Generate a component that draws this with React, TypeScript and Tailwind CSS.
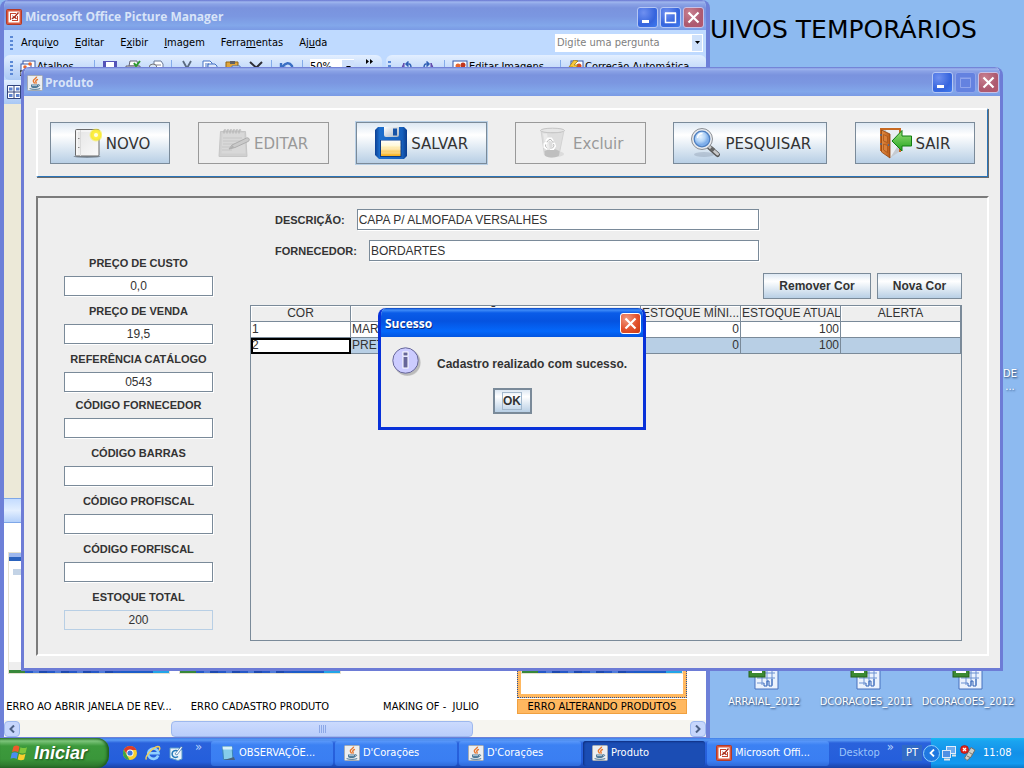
import React from "react";

const TAHOMA = "font-['DejaVu_Sans_Condensed','DejaVu_Sans',sans-serif]";
const VERDANA = "font-['DejaVu_Sans',sans-serif]";
const ARIAL = "font-['Liberation_Sans',sans-serif]";

/* ---------- icons ---------- */

function JavaIcon({ className = "size-4" }: { className?: string }) {
  return (
    <svg viewBox="0 0 16 16" className={className} aria-hidden="true">
      <rect x=".5" y=".5" width="15" height="15" rx="1" fill="#eceef0" stroke="#a5abb4" />
      <path d="M9.6 1.6C10 3.2 6 4.2 6.3 6c.1 1 1 1.6 1.4 2.6M11 4.4C9 5 8.2 6 9 7.2c.3.5.2.9-.1 1.4" fill="none" stroke="#e8762c" strokeWidth="1.4" />
      <path d="M4 9.5h7.2v1.6c0 1.2-1 2-2 2H6c-1.200 0-2-.8-2-2z" fill="#4c7896" />
      <path d="M11 9.800c2-.6 2.500 1.200-.3 2M2.600 13.600c2.500 1 8.200 1 10.600 0" fill="none" stroke="#4c7896" />
      <path d="M5 10.600h5" stroke="#d7e4ee" strokeWidth=".7" />
    </svg>
  );
}

function PictureManagerIcon() {
  return (
    <svg viewBox="0 0 16 16" className="size-4 shrink-0" aria-hidden="true">
      <rect x=".5" y=".5" width="15" height="15" rx="1" fill="#d9583f" stroke="#b23a28" />
      <rect x="2.500" y="2.500" width="11" height="11" fill="#fff" />
      <path d="M4 4h6v1H5v6H4zM12 7v5H6v-1h5V7z" fill="#c4452f" />
      <path d="m6 6 2 1.500L12 3l1 1-3.500 4L11 9.500l-1 .8L8.500 9 6 10.500 5.500 9.500 7 8z" fill="#a92c1a" />
    </svg>
  );
}

function NovoIcon() {
  return (
    <svg viewBox="0 0 32 32" className="size-8" aria-hidden="true">
      <defs>
        <linearGradient id="novoPage" x1="0" y1="0" x2="1" y2="1">
          <stop offset="0" stopColor="#e4e4e4" />
          <stop offset="1" stopColor="#fafafa" />
        </linearGradient>
        <radialGradient id="novoSun">
          <stop offset="0" stopColor="#fffef0" />
          <stop offset=".3" stopColor="#fff04a" />
          <stop offset=".7" stopColor="#f7ea3a" />
          <stop offset="1" stopColor="#f7ea3a" stopOpacity="0" />
        </radialGradient>
      </defs>
      <ellipse cx="17" cy="29.500" rx="13.500" ry="1.500" fill="#55606c" opacity=".6" />
      <rect x="5.500" y="2.500" width="23.500" height="26.500" rx="1" fill="url(#novoPage)" stroke="#6b6b6b" />
      <path d="M7 4v24M6.500 4H28" stroke="#fff" />
      <path d="M10.500 3v26" stroke="#dadada" />
      <path d="M8 11.500h1.500M8 20.500h1.500" stroke="#8a8a8a" strokeWidth="1.200" />
      <circle cx="26" cy="8" r="7" fill="url(#novoSun)" />
      <circle cx="26" cy="8" r="2" fill="#fffde0" />
    </svg>
  );
}

function EditarIcon() {
  return (
    <svg viewBox="0 0 32 32" className="size-8" aria-hidden="true">
      <path d="M2.500 4.500h25l1.500 25H1z" fill="#d0d0d0" stroke="#c6c6c6" />
      <path d="M3.500 26.500 4.500 6h21.500l1.500 20.500z" fill="#d8d8d8" />
      <path d="M5 11h19M5 14h18M5 17h15M4 20h11M4 23h10" stroke="#c6c6c6" />
      {[6, 9, 12, 15, 18, 21].map((x) => (
        <path key={x} d={`M${x} 6.500V3.500a1.200 1.500 0 0 1 2 0`} fill="none" stroke="#b4b4b4" strokeWidth="1.100" />
      ))}
      <path d="m11 22 3-4L28.500 11c2.500-.8 3.800 2 1.800 3.400L17 20.500z" fill="#cacaca" stroke="#adadad" />
      <path d="m11 22 3.500-3.500 2 2z" fill="#b0b0b0" />
    </svg>
  );
}

function SalvarIcon() {
  return (
    <svg viewBox="0 0 32 32" className="size-8" aria-hidden="true">
      <defs>
        <linearGradient id="diskBody" x1="0" y1="0" x2="1" y2="0">
          <stop offset="0" stopColor="#0c3f93" />
          <stop offset=".15" stopColor="#1d6fce" />
          <stop offset=".85" stopColor="#1660bd" />
          <stop offset="1" stopColor="#0b3c8c" />
        </linearGradient>
        <linearGradient id="diskLabel" x1="0" y1="0" x2="0" y2="1">
          <stop offset="0" stopColor="#fff" />
          <stop offset=".35" stopColor="#fff6cf" />
          <stop offset="1" stopColor="#f9b21d" />
        </linearGradient>
        <linearGradient id="diskShutter" x1="0" y1="0" x2="1" y2="1">
          <stop offset="0" stopColor="#fff" />
          <stop offset="1" stopColor="#a9b5c2" />
        </linearGradient>
      </defs>
      <path d="M3 0h26l3 3v26l-3 3H4l-4-4V3z" fill="url(#diskBody)" />
      <path d="M9 0h15v8q0 2-2 2H11q-2 0-2-2z" fill="url(#diskShutter)" />
      <rect x="18" y="1.500" width="4" height="7" fill="#1753a6" />
      <rect x="5" y="13" width="21.500" height="17" fill="#0a3b87" />
      <rect x="6" y="13.500" width="19.500" height="15.500" fill="url(#diskLabel)" />
      <path d="M6 18h19.500M6 22h19.500M6 26h19.500" stroke="#fff" opacity=".35" />
    </svg>
  );
}

function ExcluirIcon() {
  return (
    <svg viewBox="0 0 32 32" className="size-8" aria-hidden="true">
      <ellipse cx="19" cy="27" rx="8" ry="3" fill="#dcdcdc" />
      <path d="M4 3.500 7.500 28q6.500 4 14.500 0L27 3.500z" fill="#dedede" stroke="#d2d2d2" />
      <path d="M7.500 24q8-4 15 0l-.8 5q-7 3-13.500 0z" fill="#bfbfbf" />
      <path d="M6 6.500 9 23h4L10 6.500z" fill="#eee" opacity=".8" />
      <ellipse cx="15.500" cy="3.500" rx="12" ry="2.300" fill="#e6e6e6" stroke="#c4c4c4" />
      <path d="M14 5.500h10" stroke="#c8c8c8" />
      <path d="m9.500 14.500 2-2.500h2.500l1.500 2.500M16.500 16l1 3-1.500 2.500H13M10.500 21.500 8 20v-3l1.500-1.500" fill="none" stroke="#fff" strokeWidth="3" />
      <path d="m10 15 2-2.500h2l1.500 2.500M16.500 17l.5 2-1.500 2H13M10.500 21 8.500 19.500v-2" fill="none" stroke="#bcbcbc" strokeWidth="1" />
    </svg>
  );
}

function PesquisarIcon() {
  return (
    <svg viewBox="0 0 32 32" className="size-8" aria-hidden="true">
      <defs>
        <radialGradient id="lens" cx=".4" cy=".35">
          <stop offset="0" stopColor="#e8f4ff" />
          <stop offset=".6" stopColor="#b6d6f8" />
          <stop offset="1" stopColor="#7eaeea" />
        </radialGradient>
      </defs>
      <ellipse cx="14" cy="27.500" rx="10" ry="2.500" fill="#8c9cae" opacity=".4" />
      <path d="m19 20 8.500 7.500" stroke="#555" strokeWidth="5" strokeLinecap="round" />
      <path d="m19 19.500 8.500 7.500" stroke="#c9c9c9" strokeWidth="3" strokeLinecap="round" />
      <path d="m21 21 3 2.500" stroke="#666" strokeWidth="4" />
      <circle cx="12" cy="12" r="10.500" fill="#e9ebee" stroke="#8c9096" strokeWidth="1" />
      <circle cx="12" cy="12" r="7.800" fill="url(#lens)" stroke="#4e7fc0" strokeWidth="1.300" />
      <path d="M7.500 11q.5-4.500 5-4.500" fill="none" stroke="#fff" strokeWidth="1.300" />
    </svg>
  );
}

function SairIcon() {
  return (
    <svg viewBox="0 0 32 32" className="size-8" aria-hidden="true">
      <defs>
        <linearGradient id="door" x1="0" y1="0" x2="1" y2="0">
          <stop offset="0" stopColor="#e28c45" />
          <stop offset="1" stopColor="#b95b17" />
        </linearGradient>
        <linearGradient id="arrowGreen" x1="0" y1="0" x2="0" y2="1">
          <stop offset="0" stopColor="#9be07a" />
          <stop offset="1" stopColor="#1fa21b" />
        </linearGradient>
      </defs>
      <path d="M0 1h21v24h-2V3H2v21H0z" fill="#c76a23" />
      <path d="M2 3h17v22l-9 6z" fill="#c5cad0" />
      <path d="M6 3h13v14L10 31z" fill="#e9edf1" />
      <path d="m1.500 3 8.500 4v24l-8.500-6z" fill="url(#door)" stroke="#8e430e" strokeWidth=".8" />
      <path d="m3.500 7.500 4 2v6l-4-1.500zM3.500 17l4 1.500v7l-4-2.500z" fill="#d9803a" stroke="#a45215" strokeWidth=".7" />
      <path d="M1 7v2M1 16v2M8.500 17v2" stroke="#4b6c9a" strokeWidth="1.400" />
      <path d="M12 14 22 3.500V9h9.500v10H22v5z" fill="url(#arrowGreen)" stroke="#107c10" />
    </svg>
  );
}

function InfoIcon() {
  return (
    <svg viewBox="0 0 32 32" className="size-8" aria-hidden="true">
      <circle cx="15.500" cy="16" r="13" fill="#777" opacity=".25" />
      <circle cx="15" cy="15" r="13.500" fill="#777" opacity=".25" />
      <circle cx="13.500" cy="13.500" r="12.700" fill="#ccccff" stroke="#666699" />
      <path d="M13.500 4.500v5M13.500 10v11.500" stroke="#fff" strokeWidth="6" />
      <path d="M13.500 5.500v3M13.500 10v10.500" stroke="#666699" strokeWidth="4" />
    </svg>
  );
}

function SheetIcon() {
  return (
    <svg viewBox="0 0 32 32" className="size-8" aria-hidden="true">
      <path d="M7 2h23v28H7z" fill="#eaf2fd" stroke="#4770bd" />
      <path d="M9 14h18M9 19h18M9 24h7M14 12v14M19 12v14M24 12v14" stroke="#6a91d2" />
      <path d="M16 24v3h3v-5h2v5h3v-7" fill="none" stroke="#2e61b5" />
      <rect x="1" y="4" width="16" height="14" fill="#3c8a32" stroke="#24601d" />
      <path d="M4 13h10M9 8h5" stroke="#fff" strokeWidth="2" />
    </svg>
  );
}

function WindowsFlag() {
  return (
    <svg viewBox="0 0 20 18" className="h-[18px] w-5" aria-hidden="true">
      <path d="M3.500 2.500q3-2 6 .2l-1.300 5.600q-3-2-6.200-.3z" fill="#ee5a2b" />
      <path d="M10.500 3.200q3 1.800 6.500 0l-1.300 5.600q-3.200 1.600-6.500 0z" fill="#7fc73c" />
      <path d="M1.800 9q3-1.600 6.200.3L6.700 15q-3-2-6.200-.3z" fill="#4a8df0" />
      <path d="M9 9.800q3.200 1.700 6.500 0l-1.400 5.600q-3 1.600-6.400 0z" fill="#f9cf2e" />
    </svg>
  );
}

function ChromeIcon() {
  return (
    <svg viewBox="0 0 16 16" className="size-4" aria-hidden="true">
      <circle cx="8" cy="8" r="7" fill="#f7cf2f" />
      <path d="M1.800 4.800A7 7 0 0 1 14.400 5H8L4.800 9z" fill="#dc3b2a" />
      <path d="M1.800 4.800 5 10.500l2.500 4.500A7 7 0 0 1 1.800 4.800z" fill="#39a34a" />
      <circle cx="8" cy="8" r="3.500" fill="#fff" />
      <circle cx="8" cy="8" r="2.600" fill="#3b78dc" />
    </svg>
  );
}

function ExplorerIcon() {
  return (
    <svg viewBox="0 0 16 16" className="size-4" aria-hidden="true">
      <path d="M13.200 10.500A5.200 5.200 0 1 1 13.500 8.200H4" fill="none" stroke="#8fd0ff" strokeWidth="2.600" />
      <path d="M1.500 14.500C-1 12 8 2 13 1.500c2.500 0 2 2.500 1 4" fill="none" stroke="#f5cf55" strokeWidth="1.400" />
    </svg>
  );
}

function DesktopIcon() {
  return (
    <svg viewBox="0 0 16 16" className="size-4" aria-hidden="true">
      <path d="M2 3h9l3 2v9l-4 1.500L2 13z" fill="#e8f3fb" stroke="#5a9ac8" />
      <path d="M10.500 7A3.500 3.500 0 1 0 10 11.500" fill="none" stroke="#2479b8" strokeWidth="1.500" />
      <path d="m7 9 6-7.500 1.500 1L9 10z" fill="#fff" stroke="#3973a8" strokeWidth=".7" />
    </svg>
  );
}

function NotepadIcon() {
  return (
    <svg viewBox="0 0 16 16" className="size-4" aria-hidden="true">
      <path d="M2.500 1.500h9.500l1 13H3.500z" fill="#86cdea" stroke="#3e86b4" />
      <path d="M2.500 1.500H12l.3 3H2.800z" fill="#d6f0fa" />
      <path d="M4 15h11l-1-3z" fill="#4a6480" />
    </svg>
  );
}

function TrayNetIcon() {
  return (
    <svg viewBox="0 0 16 16" className="size-4" aria-hidden="true">
      <rect x="5.500" y="1.500" width="9" height="7" fill="#6facef" stroke="#e2eefc" />
      <rect x="1.500" y="5.500" width="8" height="7" fill="#4f90e4" stroke="#dbe8f8" />
      <path d="M3 14.500h6M11 10.500h4" stroke="#e2e6ea" strokeWidth="2" />
    </svg>
  );
}

function TrayUsbIcon() {
  return (
    <svg viewBox="0 0 16 16" className="size-4" aria-hidden="true">
      <path d="m7 9 4-6.500L15 5l-4 7-4 3.500L4.500 13z" fill="#cfcfc9" stroke="#6e6e6a" />
      <path d="m7 11 3 1.500M9.500 7.500l3 2" stroke="#76766f" />
      <circle cx="4.500" cy="4.500" r="4" fill="#e5231b" stroke="#a30d08" strokeWidth=".6" />
      <path d="m3 3 3 3m0-3L3 6" stroke="#fff" strokeWidth="1.300" />
    </svg>
  );
}

const toolbarGlyphs: Record<string, React.ReactNode> = {
  atalhos: (
    <>
      <rect x="3" y="1" width="12" height="9" fill="#fff" stroke="#3558a8" />
      <rect x="1" y="4" width="10" height="8" fill="#fff" stroke="#3558a8" />
      <circle cx="5" cy="7" r="1.800" fill="#e8662d" />
      <circle cx="10" cy="4" r="1.800" fill="#e8662d" />
      <path d="M0 11h6v5H0z" fill="#fff" stroke="#000" />
    </>
  ),
  salvar: (
    <>
      <rect x="1" y="1" width="14" height="14" fill="#5453b8" />
      <rect x="4" y="2" width="8" height="7" fill="#fff" />
      <rect x="4" y="10" width="8" height="5" fill="#c8cbe8" />
    </>
  ),
  imprimir: (
    <>
      <path d="M5 1h7l1 5H4z" fill="#fff" stroke="#667" />
      <path d="M1 6h14v6H1z" fill="#cfd2d6" stroke="#667" />
      <path d="m9 3 2 3 4-5" fill="none" stroke="#2f9a2f" strokeWidth="2" />
    </>
  ),
  pesquisar: (
    <>
      <path d="M6 1h7l2 3v8H6z" fill="#fff" stroke="#6b7a99" />
      <circle cx="5" cy="8" r="4" fill="#d8e5f5" stroke="#777" />
      <path d="M8 5h5M8 8h5" stroke="#889" />
    </>
  ),
  recortar: <path d="m4 1 5 9M12 1 7 10" stroke="#5b6b80" strokeWidth="1.800" />,
  copiar: (
    <>
      <path d="M1 1h7l2 2v8H1z" fill="#fff" stroke="#4472c4" />
      <path d="M6 4h7l2 2v8H6z" fill="#dbe7fa" stroke="#4472c4" />
      <path d="M3 4h4M3 6h3M8 8h5" stroke="#4472c4" />
    </>
  ),
  colar: (
    <>
      <path d="M1 2h12v12H1z" fill="#e0a63c" stroke="#8f6415" />
      <path d="M5 1h5v3H5z" fill="#5f6064" />
      <path d="M7 6h8v9H7z" fill="#fff" stroke="#4472c4" />
    </>
  ),
  excluir: <path d="m2 2 12 11M14 2 3 13" stroke="#2e2e36" strokeWidth="2" />,
  desfazer: <path d="M3 7q6-7 10-1 1 4-2 8M2 3v5h5" fill="none" stroke="#3a6fc4" strokeWidth="2.400" />,
  girarEsq: (
    <>
      <path d="m1 14 5-11v11z" fill="#8763c4" stroke="#5b46a8" />
      <path d="M8 4h3q2 0 2 4M10.500 1.500 8 4l2.500 2.500" fill="none" stroke="#2f5fb4" strokeWidth="1.500" />
    </>
  ),
  girarDir: (
    <>
      <path d="M10 3v11h5z" fill="#8763c4" stroke="#5b46a8" />
      <path d="M8 4H5Q3 4 3 8M5.500 1.500 8 4 5.500 6.500" fill="none" stroke="#2f5fb4" strokeWidth="1.500" />
    </>
  ),
  editar: (
    <>
      <rect x="1" y="1" width="14" height="12" fill="#fff" stroke="#3558a8" />
      <circle cx="6" cy="6" r="2.500" fill="#e8662d" />
      <circle cx="11" cy="5" r="2.500" fill="#c1351c" />
    </>
  ),
  correcao: (
    <>
      <rect x="3" y="1" width="12" height="12" fill="#fff" stroke="#3558a8" />
      <circle cx="11" cy="6" r="2.500" fill="#d84c22" />
      <path d="M6 0 1 7h4l-3 7 8-9H6l4-4z" fill="#f8c83a" stroke="#9a7415" strokeWidth=".7" />
    </>
  ),
};

function Glyph({ name }: { name: string }) {
  return (
    <svg viewBox="0 0 16 16" className="size-4 shrink-0" aria-hidden="true">
      {toolbarGlyphs[name]}
    </svg>
  );
}

/* ---------- window chrome ---------- */

const captionLook = {
  blue: "bg-[radial-gradient(circle_at_30%_25%,#6f90f0,#3564dd_60%,#3f7cf0)] border-[#b4c6f4]",
  dim: "bg-[#6482e0] border-[#8ea5ea]",
  rose: "bg-[radial-gradient(circle_at_30%_25%,#c98090,#ad5a70_60%,#b4566c)] border-[#c9c0e4]",
  red: "bg-[radial-gradient(circle_at_30%_25%,#f09a80,#e2512c_55%,#c93a12)] border-[#fff]",
};

function CaptionButton({ kind, look, label }: { kind: "min" | "max" | "close"; look: keyof typeof captionLook; label: string }) {
  return (
    <button
      type="button"
      aria-label={label}
      disabled={look === "dim"}
      className={`flex size-[21px] items-center justify-center rounded-[3px] border ${captionLook[look]}`}
    >
      <svg viewBox="0 0 19 19" className="size-[19px]" aria-hidden="true">
        {kind === "min" && <path d="M4 13.500h7" stroke="#fff" strokeWidth="3" />}
        {kind === "max" && (
          <path d="M4.500 5.500h10v9h-10zM4 5h11" fill="none" stroke={look === "dim" ? "#90a5ec" : "#fff"} strokeWidth={look === "dim" ? 1 : 1.500} />
        )}
        {kind === "close" && <path d="m4.500 4.500 10 10m0-10-10 10" stroke="#fff" strokeWidth="2.200" />}
      </svg>
    </button>
  );
}

const inactiveTitle =
  "bg-[linear-gradient(#6674d0_0,#9fb6ee_2px,#8ba3e6_4px,#7a93de_8px,#7b97e1_55%,#82a7ea_85%,#7a9ae4_100%)]";

/* ---------- picture manager ---------- */

function Grip() {
  return <span className="h-3.5 w-[3px] shrink-0 bg-[repeating-linear-gradient(#5a88d6_0_2px,transparent_2px_4px)]" />;
}

function Sep() {
  return <span className="h-4 w-px shrink-0 bg-[#84acea]" />;
}

const menus: [string, string, string][] = [
  ["Arqui", "v", "o"],
  ["", "E", "ditar"],
  ["E", "x", "ibir"],
  ["", "I", "magem"],
  ["Ferra", "m", "entas"],
  ["Aj", "u", "da"],
];

function MiniShot() {
  return (
    <div className="flex h-[122px] w-[162px] flex-col border border-[#e5e2d0] bg-white">
      <div className="h-1 bg-[#9db8ee]" />
      <div className="h-1 bg-[#2a62bd]" />
      <div className="mt-2 ml-1 h-1.5 w-10 bg-[#c3d3e6]" />
      <div className="grow" />
      <div className="h-2 bg-[#eee]" />
      <div className="flex h-[3px]">
        <span className="w-4 bg-[#38883a]" />
        <span className="w-24 bg-[repeating-linear-gradient(90deg,#2558c8_0_8px,#4f7cdc_8px_14px,#1c49b0_14px_22px)]" />
        <span className="grow bg-[#1c5cc8]" />
        <span className="w-4 bg-[#22a4e8]" />
      </div>
    </div>
  );
}

const shots = [
  { caption: "ERRO AO ABRIR JANELA DE REV...", preview: true, selected: false },
  { caption: "ERRO CADASTRO PRODUTO", preview: true, selected: false },
  { caption: "MAKING OF -  JULIO", preview: false, selected: false },
  { caption: "ERRO ALTERANDO PRODUTOS", preview: true, selected: true },
];

function PictureManager() {
  return (
    <section className={`absolute top-0 left-0 flex h-full w-[710px] flex-col overflow-hidden rounded-t-lg border-x-4 border-[#6d80d8] bg-[#bfdaff] text-[11px] ${TAHOMA}`}>
      <header className={`-mx-1 flex h-[30px] shrink-0 items-center gap-[3px] px-1.5 pt-1 ${inactiveTitle}`}>
        <PictureManagerIcon />
        <h2 className="grow font-['Open_Sans',sans-serif] text-[12px] leading-4 font-bold text-[#d8e4f8]">Microsoft Office Picture Manager</h2>
        <div className="flex gap-0.5">
          <CaptionButton kind="min" look="blue" label="Minimizar" />
          <CaptionButton kind="max" look="blue" label="Maximizar" />
          <CaptionButton kind="close" look="rose" label="Fechar" />
        </div>
      </header>
      <div className="flex h-[25px] shrink-0 items-center pr-[3px] pl-1.5">
        <Grip />
        <nav className="ml-2 flex grow gap-4">
          {menus.map(([a, u, b]) => (
            <button key={a + u + b} type="button" className="leading-4 text-black">
              {a}
              <u>{u}</u>
              {b}
            </button>
          ))}
        </nav>
        <input aria-label="Digite uma pergunta" placeholder="Digite uma pergunta" className="h-[18px] w-[136px] bg-white px-0.5 placeholder:text-[#808080]" />
        <button type="button" aria-label="Abrir lista" className="flex h-[18px] w-3 items-center justify-center border border-white bg-[#cfe1fb]">
          <svg viewBox="0 0 5 3" className="h-[3px] w-[5px]" aria-hidden="true"><path d="M0 0h5L2.500 3z" /></svg>
        </button>
      </div>
      <div className="flex h-[25px] shrink-0 gap-1">
        <div className="flex w-[378px] items-center gap-[7px] rounded-md bg-[linear-gradient(#e3efff,#a9c8f5)] pr-2 pl-1.5 whitespace-nowrap">
          <Grip />
          <Glyph name="atalhos" />
          <span className="-ml-1.5 w-[50px] shrink-0">Atalhos...</span>
          <Sep />
          <Glyph name="salvar" />
          <Glyph name="imprimir" />
          <Glyph name="pesquisar" />
          <Sep />
          <Glyph name="recortar" />
          <Glyph name="copiar" />
          <Glyph name="colar" />
          <Glyph name="excluir" />
          <Sep />
          <Glyph name="desfazer" />
          <Sep />
          <span className="flex w-11 shrink-0 items-center justify-between bg-white">
            50%
            <span className="flex h-4 w-3 items-center justify-center bg-[#cfe1fb]">
              <svg viewBox="0 0 5 3" className="h-[3px] w-[5px]" aria-hidden="true"><path d="M0 0h5L2.500 3z" /></svg>
            </span>
          </span>
          <svg viewBox="0 0 8 5" className="mb-3 ml-auto h-[5px] w-2" aria-hidden="true">
            <path d="M0 0v5l3-2.500zM4 0v5l3-2.500z" />
          </svg>
        </div>
        <div className="flex grow items-center gap-[7px] rounded-md bg-[linear-gradient(#e3efff,#a9c8f5)] pl-0.5 whitespace-nowrap">
          <Grip />
          <Glyph name="girarEsq" />
          <Glyph name="girarDir" />
          <Sep />
          <Glyph name="editar" />
          <span className="-ml-1.5 w-[84px] shrink-0">Editar Imagens...</span>
          <Sep />
          <Glyph name="correcao" />
          <span className="-ml-1.5">Correção Automática</span>
        </div>
      </div>
      <div className="flex h-6 shrink-0 items-center bg-[linear-gradient(#e3efff,#a9c8f5)] pl-[3px]">
        <svg viewBox="0 0 14 14" className="size-3.5" aria-hidden="true">
          <path d="M.5.5h13v13H.500zM7 .5v13M.5 7h13" fill="#fff" stroke="#31437c" />
          <path d="M2 2.500h3.500v3H2zM9 2.500h3.500v3H9zM2 9h3.500v3H2zM9 9h3.500v3H9z" fill="#5d82cf" />
        </svg>
      </div>
      <div className="grow bg-[#ece9d8]" />
      <div className="h-[25px] shrink-0 border-y border-[#7ea7e8] bg-[linear-gradient(#c4dcff,#e3efff_50%,#b4d0fa)]" />
      <ul className="flex h-[197px] shrink-0 gap-px bg-white pt-[5px]">
        {shots.map((s) => (
          <li key={s.caption} className="flex w-[170px] shrink-0 flex-col gap-px">
            <div className={s.selected ? "flex h-[170px] items-center justify-center border-[4px] border-[#ffb860] outline-1 -outline-offset-1 outline-dotted outline-[#2450a0]" : "flex h-[170px] items-center justify-center"}>
              {s.preview && <MiniShot />}
            </div>
            <span className={s.selected ? "h-[15px] border border-[#f0a040] bg-[#ffb860] text-center leading-[13px] whitespace-pre text-black" : "h-[15px] text-center leading-[15px] whitespace-pre text-black"}>
              {s.caption}
            </span>
          </li>
        ))}
      </ul>
      <div className="flex h-[18px] shrink-0 items-center border-b border-[#6d80d8] bg-[#f6f5f0] text-[#4d6185]">
        <button type="button" aria-label="Rolar para a esquerda" className="flex size-4 items-center justify-center rounded-sm border border-[#9db8ee] bg-[#c6d6fc]">
          <svg viewBox="0 0 8 8" className="size-2" aria-hidden="true"><path d="M6 .5 2.500 4 6 7.500" fill="none" stroke="currentColor" strokeWidth="2" /></svg>
        </button>
        <div className="flex grow pl-[151px]">
          <span className="flex h-4 w-[302px] items-center justify-center gap-px rounded-sm border border-[#9db8ee] bg-[linear-gradient(#cbdafd,#b9cdfb)]">
            <i className="h-2 w-px bg-[#8ca8e6]" />
            <i className="h-2 w-px bg-[#8ca8e6]" />
            <i className="h-2 w-px bg-[#8ca8e6]" />
            <i className="h-2 w-px bg-[#8ca8e6]" />
          </span>
        </div>
        <button type="button" aria-label="Rolar para a direita" className="flex size-4 items-center justify-center rounded-sm border border-[#9db8ee] bg-[#c6d6fc]">
          <svg viewBox="0 0 8 8" className="size-2" aria-hidden="true"><path d="M2 .5 5.500 4 2 7.500" fill="none" stroke="currentColor" strokeWidth="2" /></svg>
        </button>
      </div>
    </section>
  );
}

/* ---------- produto ---------- */

const actions = [
  { label: "NOVO", icon: <NovoIcon />, width: "w-[120px]", state: "normal" },
  { label: "EDITAR", icon: <EditarIcon />, width: "w-[131px]", state: "disabled" },
  { label: "SALVAR", icon: <SalvarIcon />, width: "w-[131px]", state: "default" },
  { label: "Excluir", icon: <ExcluirIcon />, width: "w-[131px]", state: "disabled" },
  { label: "PESQUISAR", icon: <PesquisarIcon />, width: "w-[154px]", state: "normal" },
  { label: "SAIR", icon: <SairIcon />, width: "w-[120px]", state: "normal" },
];

const metal = "bg-[linear-gradient(#dde8f3_0,#ffffff_30%,#b8cfe5_100%)] text-[#333]";

const actionLook: Record<string, string> = {
  normal: `border border-[#7a8a99] ${metal}`,
  disabled: "border border-[#999] text-[#999]",
  default: `border border-[#7a8a99] outline-1 outline-[#b8cfe5] ${metal}`,
};

const fieldGroups = [
  [
    { id: "custo", label: "PREÇO DE CUSTO", value: "0,0" },
    { id: "venda", label: "PREÇO DE VENDA", value: "19,5" },
    { id: "referencia", label: "REFERÊNCIA CATÁLOGO", value: "0543" },
  ],
  [
    { id: "fornecedorCod", label: "CÓDIGO FORNECEDOR", value: "" },
    { id: "barras", label: "CÓDIGO BARRAS", value: "" },
    { id: "profiscal", label: "CÓDIGO PROFISCAL", value: "" },
    { id: "forfiscal", label: "CÓDIGO FORFISCAL", value: "" },
    { id: "total", label: "ESTOQUE TOTAL", value: "200" },
  ],
];

const columns = [
  { title: "COR", width: "w-[100px]" },
  { title: "DESCRIÇÃO DA COR", width: "w-[290px]" },
  { title: "ESTOQUE MÍNI...", width: "w-[100px]" },
  { title: "ESTOQUE ATUAL", width: "w-[100px]" },
  { title: "ALERTA", width: "w-[120px]" },
];

const rows = [
  { cor: "1", nome: "MAR", minimo: "0", atual: "100", selected: false },
  { cor: "2", nome: "PRET", minimo: "0", atual: "100", selected: true },
];

const textField = "border border-[#7a8a99] bg-white text-[12px] leading-4 text-[#333] shadow-[1px_1px_0_#fff]";

function Produto() {
  const cell = "h-4 overflow-hidden border-r border-b border-[#7a8a99] p-0 px-px leading-[15px]";
  return (
    <section className={`absolute top-[67px] left-[21px] flex h-[604px] w-[982px] flex-col overflow-hidden rounded-t-lg border-x-[3px] border-b-[3px] border-[#6d7cd6] bg-[#eeeeee] text-[12px] text-[#333] ${ARIAL}`}>
      <header className={`-mx-[3px] flex h-[29px] shrink-0 items-center gap-0.5 pt-0.5 pr-1 pl-1.5 ${inactiveTitle}`}>
        <JavaIcon />
        <h2 className="grow font-['Open_Sans',sans-serif] text-[12px] leading-4 font-bold text-[#d8e4f8]">Produto</h2>
        <div className="flex gap-0.5">
          <CaptionButton kind="min" look="blue" label="Minimizar" />
          <CaptionButton kind="max" look="dim" label="Maximizar" />
          <CaptionButton kind="close" look="rose" label="Fechar" />
        </div>
      </header>
      <div className="flex grow flex-col gap-[18px] pt-3 pr-[11px] pb-3 pl-3">
        <div className="mr-px mb-px flex justify-between border-t-2 border-r border-b border-l-2 border-t-white border-r-[#2a74b8] border-b-[#2a74b8] border-l-white p-3 shadow-[1px_1px_0_#6b6b6b]">
          {actions.map((a) => (
            <button
              key={a.label}
              type="button"
              disabled={a.state === "disabled"}
              className={`flex h-[42px] items-center justify-center gap-1 text-[15px] ${VERDANA} ${a.width} ${actionLook[a.state]}`}
            >
              {a.icon}
              <span className="pt-0.5">{a.label}</span>
            </button>
          ))}
        </div>
        <div className="flex grow border-2 border-t-[#7b7b7b] border-r-white border-b-white border-l-[#7b7b7b] pr-[25px] pb-[13px] pl-[26px]">
          <div className="flex w-[149px] flex-col gap-[5px] pt-[57px]">
            {fieldGroups.map((group, i) => (
              <div key={i} className="flex flex-col gap-[7px]">
                {group.map((f) => (
                  <div key={f.id} className="flex flex-col gap-[5px]">
                    <label htmlFor={f.id} className="text-center text-[11px] leading-4 font-bold whitespace-nowrap">
                      {f.label}
                    </label>
                    <input
                      id={f.id}
                      defaultValue={f.value}
                      readOnly={f.id === "total"}
                      className={f.id === "total" ? "h-5 border border-[#b8cfe5] bg-[#eeeeee] text-center text-[12px] text-[#333]" : `h-5 text-center ${textField}`}
                    />
                  </div>
                ))}
              </div>
            ))}
          </div>
          <div className="ml-[37px] flex grow flex-col pt-[11px]">
            <div className="ml-[25px] flex w-[484px] flex-col gap-2.5">
              <div className="flex items-center gap-3">
                <label htmlFor="descricao" className="text-[11px] leading-4 font-bold">DESCRIÇÃO:</label>
                <input id="descricao" defaultValue="CAPA P/ ALMOFADA VERSALHES" className={`h-[21px] min-w-0 grow px-px ${textField}`} />
              </div>
              <div className="flex items-center gap-3">
                <label htmlFor="fornecedor" className="text-[11px] leading-4 font-bold">FORNECEDOR:</label>
                <input id="fornecedor" defaultValue="BORDARTES" className={`h-[21px] min-w-0 grow px-px ${textField}`} />
              </div>
            </div>
            <div className="mt-3 flex justify-end gap-1.5">
              <button type="button" className={`h-[26px] w-[108px] border border-[#7a8a99] font-bold ${metal}`}>Remover Cor</button>
              <button type="button" className={`h-[26px] w-[85px] border border-[#7a8a99] font-bold ${metal}`}>Nova Cor</button>
            </div>
            <div className="mt-1.5 grow border border-[#7a8a99]">
              <table className="w-full table-fixed border-separate border-spacing-0">
                <thead>
                  <tr>
                    {columns.map((c) => (
                      <th key={c.title} className={`${cell} ${c.width} text-center font-normal whitespace-nowrap shadow-[inset_1px_1px_0_#fff]`}>
                        {c.title}
                      </th>
                    ))}
                  </tr>
                </thead>
                <tbody>
                  {rows.map((r) => (
                    <tr key={r.cor} className={r.selected ? "bg-[#b8cfe5]" : "bg-white"}>
                      <td className={r.selected ? `${cell} bg-white outline-2 -outline-offset-2 outline-black` : cell}>{r.cor}</td>
                      <td className={cell}>{r.nome}</td>
                      <td className={`${cell} text-right`}>{r.minimo}</td>
                      <td className={`${cell} text-right`}>{r.atual}</td>
                      <td className={cell} />
                    </tr>
                  ))}
                </tbody>
              </table>
            </div>
          </div>
        </div>
      </div>
    </section>
  );
}

/* ---------- dialog ---------- */

function Dialog() {
  return (
    <section role="dialog" aria-labelledby="dlg" className={`absolute top-[308px] left-[378px] flex h-[122px] w-[268px] flex-col overflow-hidden rounded-t-lg border-x-[3px] border-b-[3px] border-[#0831d9] bg-[#eeeeee] text-[12px] text-[#333] ${ARIAL}`}>
      <header className="-mx-[3px] flex h-[29px] shrink-0 items-center bg-[linear-gradient(#0842c0_0,#3f8cf8_2px,#0a5ce8_5px,#0553e0_45%,#0468fb_80%,#0355e0_100%)] pt-0.5 pr-[5px] pl-[7px]">
        <h2 id="dlg" className="grow font-['Open_Sans',sans-serif] text-[12px] leading-4 font-bold text-white [text-shadow:1px_1px_0_#0a2a80]">Sucesso</h2>
        <CaptionButton kind="close" look="red" label="Fechar" />
      </header>
      <div className="flex pt-2.5 pl-[11px]">
        <InfoIcon />
        <p className="mt-[9px] ml-[13px] leading-4 font-bold whitespace-nowrap">Cadastro realizado com sucesso.</p>
      </div>
      <div className="mt-[9px] flex justify-center">
        <button type="button" className={`flex h-[26px] w-[39px] items-center justify-center border-2 border-[#7a8a99] font-bold ${metal}`}>
          <span className="border border-[#a3b8cc] leading-4">OK</span>
        </button>
      </div>
    </section>
  );
}

/* ---------- taskbar ---------- */

const tasks = [
  { key: "obs", label: "OBSERVAÇÕE...", icon: <NotepadIcon />, active: false },
  { key: "dc1", label: "D'Corações", icon: <JavaIcon />, active: false },
  { key: "dc2", label: "D'Corações", icon: <JavaIcon />, active: false },
  { key: "prod", label: "Produto", icon: <JavaIcon />, active: true },
  { key: "pm", label: "Microsoft Offi...", icon: <PictureManagerIcon />, active: false },
];

function Taskbar() {
  return (
    <footer className={`flex h-[30px] shrink-0 items-center bg-[linear-gradient(#3f7fe8_0,#5a9af5_2px,#2a62dc_5px,#245edb_80%,#1941a5_100%)] text-[11px] text-white ${TAHOMA}`}>
      <button type="button" className="flex h-full w-[109px] shrink-0 items-center gap-1 rounded-r-xl bg-[linear-gradient(#3c8a3c_0,#7cc47a_3px,#3c9a3c_8px,#3a963a_70%,#2a6f2a_100%)] pl-2.5 font-['Liberation_Sans',sans-serif] text-[18px] font-bold italic shadow-[inset_-2px_0_3px_#1d5a1d] [text-shadow:1px_1px_2px_#1b4d1b]">
        <WindowsFlag />
        Iniciar
      </button>
      <div className="ml-[13px] flex w-[89px] shrink-0 items-center gap-[7px]">
        <ChromeIcon />
        <ExplorerIcon />
        <DesktopIcon />
        <span className="mb-3 ml-1 text-[13px] leading-3 text-[#b7d3fb]">»</span>
      </div>
      <div className="flex shrink-0 gap-0.5">
        {tasks.map((t) => (
          <button
            key={t.key}
            type="button"
            className={`flex h-[25px] w-[122px] items-center gap-[3px] rounded-[3px] pl-[9px] whitespace-nowrap ${t.active ? "bg-[#1b4db4] shadow-[inset_1px_1px_2px_#0f2f80]" : "bg-[linear-gradient(#5a98fa_0,#3c81f3_4px,#3a7ef2_80%,#2f6ad8_100%)]"}`}
          >
            {t.icon}
            {t.label}
          </button>
        ))}
      </div>
      <span className="ml-2.5 text-[#9cc4fa]">Desktop</span>
      <span className="mb-3 ml-[7px] text-[13px] leading-3 text-[#b7d3fb]">»</span>
      <span className="ml-2 bg-[#316ac5] px-1 leading-4">PT</span>
      <div className="ml-auto flex h-full w-[93px] shrink-0 items-center bg-[linear-gradient(#19b9f3_0,#1aa4f0_3px,#1290e8_50%,#129af0_85%,#0d78c8_100%)]">
        <button type="button" aria-label="Mostrar ícones ocultos" className="-ml-2 flex size-[17px] items-center justify-center rounded-full border border-[#8fd0fb] bg-[#1f78e0]">
          <svg viewBox="0 0 8 8" className="size-2" aria-hidden="true"><path d="M6 .5 2.500 4 6 7.500" fill="none" stroke="#fff" strokeWidth="1.800" /></svg>
        </button>
        <span className="ml-px flex gap-[3px]">
          <TrayNetIcon />
          <TrayUsbIcon />
        </span>
        <time className="ml-[7px]">11:08</time>
      </div>
    </footer>
  );
}

/* ---------- desktop ---------- */

const iconLabel = "text-center text-[11px] leading-[13px] text-white [text-shadow:1px_1px_2px_#1f3b66]";

export default function App() {
  return (
    <div className="flex h-screen min-h-[700px] flex-col overflow-hidden bg-[#8dbaf0]">
      <main className="relative grow overflow-hidden">
        <h1 className={`absolute top-3.5 right-[47px] text-[25px] leading-8 whitespace-nowrap text-black ${VERDANA}`}>ARQUIVOS TEMPORÁRIOS</h1>
        <div className={`absolute top-[367px] left-[960px] w-[100px] ${iconLabel} ${TAHOMA}`}>
          DE
          <br />
          ...
        </div>
        <ul className="absolute bottom-[30px] left-[713px] flex">
          {["ARRAIAL_2012", "DCORACOES_2011", "DCORACOES_2012"].map((n) => (
            <li key={n} className="flex w-[102px] flex-col items-center gap-1">
              <SheetIcon />
              <span className={`${iconLabel} ${TAHOMA}`}>{n}</span>
            </li>
          ))}
        </ul>
        <PictureManager />
        <Produto />
        <Dialog />
      </main>
      <Taskbar />
    </div>
  );
}
